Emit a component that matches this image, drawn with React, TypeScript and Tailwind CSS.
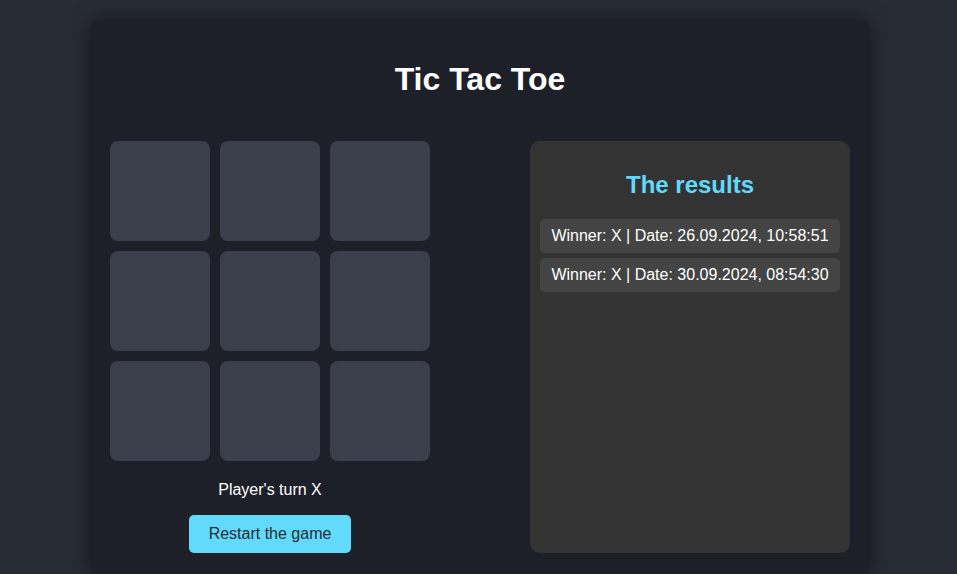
import React from "react";

export default function App() {
  const cells = Array.from({ length: 9 });
  const results = [
    "Winner: X | Date: 26.09.2024, 10:58:51",
    "Winner: X | Date: 30.09.2024, 08:54:30",
  ];
  return (
    <div
      className="min-h-[574px] bg-[#282c34] pt-[20px] text-white"
      style={{ fontFamily: '"Liberation Sans", Arial, sans-serif' }}
    >
      <div className="ml-[90px] w-[780px] rounded-[10px] bg-[#1e2029] px-[20px] pt-[20px] pb-[24px] shadow-[0_0_20px_rgba(0,0,0,0.5)]">
        <h1 className="mt-[21.44px] mb-[42.44px] text-center text-[32px] font-bold leading-[normal]">
          Tic Tac Toe
        </h1>
        <div className="flex justify-between">
          <div className="flex w-[320px] flex-col items-center">
            <div className="grid grid-cols-[repeat(3,100px)] gap-[10px]">
              {cells.map((_, i) => (
                <div key={i} className="h-[100px] w-[100px] rounded-[8px] bg-[#3a3f4b]" />
              ))}
            </div>
            <p className="mt-[20px] text-[16px] leading-[normal]">Player's turn X</p>
            <button className="mt-[16px] rounded-[5px] bg-[#61dafb] px-[20px] py-[10px] text-[16px] leading-[normal] text-[#282c34]">
              Restart the game
            </button>
          </div>
          <div className="w-[320px] rounded-[10px] bg-[#333333] p-[10px]">
            <h2 className="my-[19.92px] text-center text-[24px] font-bold leading-[normal] text-[#61dafb]">
              The results
            </h2>
            <div className="flex flex-col gap-[5px]">
              {results.map((r) => (
                <div key={r} className="rounded-[5px] bg-[#444444] py-[8px] text-center text-[16px] leading-[normal]">
                  {r}
                </div>
              ))}
            </div>
          </div>
        </div>
      </div>
    </div>
  );
}
